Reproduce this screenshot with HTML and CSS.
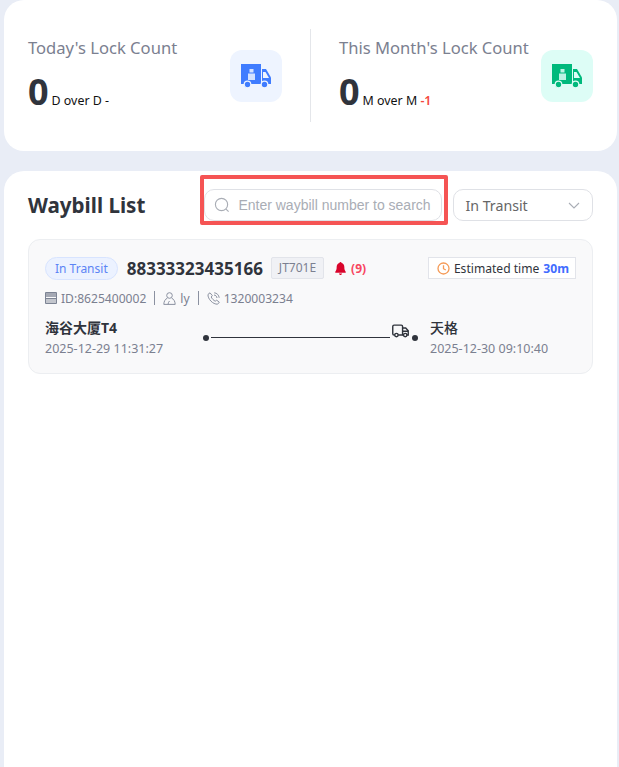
FILE: index.html
```html
<!DOCTYPE html>
<html lang="en">
<head>
    <meta charset="UTF-8">
    <meta name="viewport" content="width=device-width, initial-scale=1.0">
    <title>Waybill List</title>
    <link rel="stylesheet" href="styles.css">
</head>
<body>

    <section class="stats-card">
        <div class="stat">
            <div class="stat-text">
                <div class="stat-label">Today's Lock Count</div>
                <div class="stat-value"><b>0</b><span>D over D -</span></div>
            </div>
            <div class="stat-icon stat-icon-blue">
                <svg width="30" height="25" viewBox="0 0 30 25">
                    <path fill="#3f7cff" d="M0 0h20v20H0z"/>
                    <path fill="#3f7cff" d="M21 5h4l5 8.500V20h-9z"/>
                    <path fill="#eef4ff" d="M22 8h2.500L28 14h-6z"/>
                    <path fill="#eef4ff" d="M8.500 5h4v3.500h-4zM7 9.500h7V16H7z" opacity=".85"/>
                    <circle cx="6.500" cy="20.500" r="3.300" fill="#3f7cff" stroke="#eef4ff" stroke-width="1.200"/>
                    <circle cx="23.500" cy="20.500" r="3.300" fill="#3f7cff" stroke="#eef4ff" stroke-width="1.200"/>
                </svg>
            </div>
        </div>
        <div class="stat stat-month">
            <div class="stat-text">
                <div class="stat-label">This Month's Lock Count</div>
                <div class="stat-value"><b>0</b><span>M over M <em>-1</em></span></div>
            </div>
            <div class="stat-icon stat-icon-green">
                <svg width="30" height="25" viewBox="0 0 30 25">
                    <path fill="#00b97c" d="M0 0h20v20H0z"/>
                    <path fill="#00b97c" d="M21 5h4l5 8.500V20h-9z"/>
                    <path fill="#ddfdf6" d="M22 8h2.500L28 14h-6z"/>
                    <path fill="#ddfdf6" d="M8.500 5h4v3.500h-4zM7 9.500h7V16H7z" opacity=".85"/>
                    <circle cx="6.500" cy="20.500" r="3.300" fill="#00b97c" stroke="#ddfdf6" stroke-width="1.200"/>
                    <circle cx="23.500" cy="20.500" r="3.300" fill="#00b97c" stroke="#ddfdf6" stroke-width="1.200"/>
                </svg>
            </div>
        </div>
    </section>

    <section class="list-card">
        <div class="list-header">
            <h2>Waybill List</h2>
            <div class="search-box">
                <svg width="16" height="16" viewBox="0 0 17 17" fill="none" stroke="#a9adb5" stroke-width="1.200">
                    <circle cx="8" cy="8" r="6.500"/>
                    <path d="M12.800 12.800l2.700 2.700"/>
                </svg>
                <span>Enter waybill number to search</span>
            </div>
            <div class="status-select">
                <span>In Transit</span>
                <svg width="12" height="7" viewBox="0 0 12 7" fill="none" stroke="#a9adb5" stroke-width="1.100">
                    <path d="M1 1l5 5 5-5"/>
                </svg>
            </div>
        </div>

        <div class="waybill">
            <div class="waybill-top">
                <span class="status-tag">In Transit</span>
                <span class="waybill-no">88333323435166</span>
                <span class="model-tag">JT701E</span>
                <span class="alarm">
                    <svg width="11" height="13" viewBox="0 0 12 13" preserveAspectRatio="none">
                        <path fill="#d9042b" d="M6 0c.7 0 1.100.4 1.200 1 2 .5 3 2.200 3 4.200 0 2 .4 3.300 1.500 4.500v1H.3v-1c1.100-1.200 1.500-2.500 1.500-4.500 0-2 1-3.700 3-4.200C4.900.4 5.300 0 6 0zM4.300 11.500h3.400C7.500 12.400 6.900 13 6 13s-1.500-.6-1.700-1.500z"/>
                    </svg>
                    (9)
                </span>
                <span class="eta">
                    <svg width="13" height="13" viewBox="0 0 13 13" fill="none" stroke="#f59a56" stroke-width="1.300">
                        <circle cx="6.500" cy="6.500" r="5.500"/>
                        <path d="M6.500 3.200v3.500l2.300 1.300"/>
                    </svg>
                    Estimated time <b>30m</b>
                </span>
            </div>

            <div class="waybill-meta">
                <span class="meta-item">
                    <svg width="12" height="12" viewBox="0 0 12 12">
                        <path fill="none" stroke="#7d8494" d="M.5.500h11v11H.5z"/>
                        <path fill="#a5a9b4" d="M1 1h10v4H1z"/>
                        <path fill="#7d8494" d="M1 6h10v1H1z"/>
                        <path fill="#c3c6cd" d="M1 7h10v4H1z"/>
                    </svg>
                    ID:8625400002
                </span>
                <i class="meta-sep"></i>
                <span class="meta-item">
                    <svg width="13" height="13" viewBox="0 0 13 13" fill="none" stroke="#8b91a0">
                        <circle cx="6.500" cy="3.500" r="2.800"/>
                        <path d="M4.300 6.200C2 7.300 1 9.300.8 12.400h11.400c-.2-3.100-1.200-5.100-3.500-6.200M5 12.400c.2-1.600.7-2.500 1.500-3.400"/>
                    </svg>
                    ly
                </span>
                <i class="meta-sep"></i>
                <span class="meta-item">
                    <svg width="13" height="13" viewBox="0 0 13 13" fill="none" stroke="#8b91a0">
                        <path d="M3 .8L1 2.400C.5 6.800 6 12.500 10.600 12.200l1.700-2-2.600-2-1.500 1C6.800 8.600 4.800 6.500 4.200 5l1.100-1.400z"/>
                        <path d="M7 3c1.600.1 2.800 1.300 3 3M7.200.8c2.700.2 4.700 2.200 5 5"/>
                    </svg>
                    1320003234
                </span>
            </div>

            <div class="route">
                <div class="route-end route-from">
                    <div class="place place-from">海谷大厦T4</div>
                    <div class="time">2025-12-29 11:31:27</div>
                </div>
                <div class="route-line">
                    <i class="dot"></i>
                    <i class="line"></i>
                    <svg class="route-truck" width="17" height="14" viewBox="0 0 18 14" fill="none" stroke="#30343c" stroke-width="1.500">
                        <path d="M3 11.300H2.200Q.8 11.300.8 10V2.200Q.8.800 2.200.800h7.600q1.400 0 1.400 1.400v9.100H6.500"/>
                        <path d="M11.200 3.800h3.300l2.700 3v4.500h-1.400M11.200 7.300h6M11.200 11.300h1.100"/>
                        <circle cx="4.700" cy="11.300" r="1.800"/>
                        <circle cx="14" cy="11.300" r="1.800"/>
                    </svg>
                    <i class="dot dot-end"></i>
                </div>
                <div class="route-end">
                    <div class="place">天格</div>
                    <div class="time">2025-12-30 09:10:40</div>
                </div>
            </div>
        </div>
    </section>

</body>
</html>
```

FILE: styles.css
```css
* {
    box-sizing: border-box;
}

html, body {
    height: 100%;
    overflow: hidden;
}

body {
    margin: 0;
    padding: 0 2px 0 4px;
    background-color: #e9edf6;
    font-family: "Noto Sans", "Noto Sans CJK SC", sans-serif;
    color: #30343c;
}

.stats-card {
    display: flex;
    align-items: center;
    height: 151px;
    padding: 29px 24px;
    background: #fff;
    border-radius: 20px;
}

.stat {
    display: flex;
    justify-content: space-between;
    align-items: center;
    width: 254px;
    height: 93px;
}

.stat-month {
    flex: 1;
    width: auto;
    margin-left: 28px;
    padding-left: 28px;
    border-left: 1px solid #e4e6ea;
}

.stat-text {
    padding-top: 10px;
}

.stat-label {
    font-size: 16.6px;
    line-height: 22px;
    color: #7b8090;
}

.stat-value {
    display: flex;
    align-items: baseline;
    margin-top: 9px;
    line-height: 48px;
}

.stat-value b {
    font-size: 36px;
    color: #30343c;
}

.stat-value span {
    margin-left: 3px;
    font-size: 12.4px;
    color: #111;
}

.stat-value em {
    font-style: normal;
    font-weight: 600;
    color: #f5483c;
}

.stat-icon {
    display: flex;
    align-items: center;
    justify-content: center;
    flex-shrink: 0;
    width: 52px;
    height: 52px;
    margin-top: 1px;
    border-radius: 12px;
}

.stat-icon-blue {
    background: #eef4ff;
}

.stat-icon-green {
    background: #ddfdf6;
}

.list-card {
    height: 620px;
    margin-top: 20px;
    padding: 18px 24px;
    background: #fff;
    border-radius: 20px 20px 0 0;
}

.list-header {
    display: flex;
    align-items: center;
    gap: 11px;
    height: 32px;
}

.list-header h2 {
    width: 166px;
    margin: 0;
    font-size: 20.6px;
    font-weight: 700;
    color: #30343c;
}

.search-box {
    position: relative;
    display: flex;
    align-items: center;
    gap: 8px;
    flex-shrink: 0;
    width: 238px;
    height: 32px;
    padding: 0 9px;
    border: 1px solid #dfe1e6;
    border-radius: 10px;
    font-family: "Liberation Sans", sans-serif;
    font-size: 14px;
    color: #a9adb5;
}

/* red highlight drawn over the search field */
.search-box::after {
    content: "";
    position: absolute;
    top: -15px;
    right: -7px;
    bottom: -5px;
    left: -5px;
    border: 4px solid #f55454;
    border-radius: 2px;
}

.search-box span {
    white-space: nowrap;
}

.status-select {
    display: flex;
    align-items: center;
    justify-content: space-between;
    width: 140px;
    height: 32px;
    padding: 0 12px 0 11px;
    border: 1px solid #dfe1e6;
    border-radius: 10px;
    font-size: 14.2px;
    color: #666;
}

.waybill {
    height: 135px;
    margin-top: 18px;
    padding: 16px;
    background: #f9f9fa;
    border: 1px solid #eceef1;
    border-radius: 12px;
}

.waybill-top {
    display: flex;
    align-items: center;
    height: 24px;
}

.status-tag {
    height: 23px;
    padding: 0 9px;
    line-height: 21px;
    font-size: 12px;
    color: #5b84f5;
    background: #ecf2ff;
    border: 1px solid #d8e4ff;
    border-radius: 12px;
}

.waybill-no {
    margin-left: 9px;
    font-size: 17px;
    font-weight: 700;
    color: #30343c;
}

.model-tag {
    height: 22px;
    margin-left: 8px;
    padding: 0 7px;
    line-height: 20px;
    font-size: 12px;
    color: #7b8090;
    background: #f0f1f5;
    border: 1px solid #e2e4ea;
    border-radius: 2px;
}

.alarm {
    display: flex;
    align-items: center;
    gap: 5px;
    margin-left: 11px;
    font-size: 12px;
    font-weight: 700;
    color: #f8465f;
}

.eta {
    display: flex;
    align-items: center;
    gap: 4px;
    height: 22px;
    margin-left: auto;
    padding: 0 6px 0 8px;
    font-size: 12.1px;
    color: #30343c;
    background: #fff;
    border: 1px solid #e2e4ea;
}

.eta b {
    color: #3f6cff;
}

.waybill-meta {
    display: flex;
    align-items: center;
    height: 16px;
    margin-top: 10px;
    font-size: 12.1px;
    color: #7b8090;
}

.meta-item {
    display: flex;
    align-items: center;
    gap: 4px;
}

.meta-sep {
    width: 1px;
    height: 14px;
    margin: 0 8px;
    background: #8b91a0;
}

.route {
    display: flex;
    margin-top: 12px;
}

.route-from {
    width: 158px;
}

.place {
    font-size: 14px;
    line-height: 20px;
    font-weight: 500;
    color: #30343c;
}

.place-from {
    font-weight: 700;
}

.time {
    margin-top: 2px;
    font-size: 12.5px;
    line-height: 18px;
    color: #7b8090;
}

.route-line {
    display: flex;
    align-items: flex-end;
    width: 227px;
    height: 17px;
    margin-top: 6px;
}

.dot {
    width: 6px;
    height: 6px;
    flex-shrink: 0;
    border-radius: 50%;
    background: #30343c;
}

.line {
    width: 179px;
    height: 1px;
    margin: 0 0 3px 2px;
    background: #30343c;
}

.route-truck {
    flex-shrink: 0;
    margin: 0 0 3px 2px;
}

.dot-end {
    margin-left: 3px;
}
```
